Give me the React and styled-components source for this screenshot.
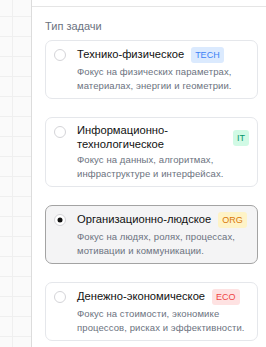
import React, { useState } from 'react';
import styled, { createGlobalStyle } from 'styled-components';

const GlobalStyle = createGlobalStyle`
    html, body {
        margin: 0;
        padding: 0;
        background: #ffffff;
    }
    body {
        font-family: "Liberation Sans", Arial, sans-serif;
    }
`;

const Layout = styled.div`
    display: flex;
    height: 347px;
    overflow: hidden;
`;

const Canvas = styled.div`
    width: 31px;
    flex-shrink: 0;
    background-color: #fafafa;
    background-image:
        linear-gradient(to right, #efefef 1px, transparent 1px),
        linear-gradient(to bottom, #efefef 1px, transparent 1px);
    background-size: 20px 20px;
    background-position: 12px 16px;
`;

const Sidebar = styled.aside`
    flex: 1;
    min-width: 0;
    border-left: 1px solid #dcdcdc;
    background: #ffffff;
`;

const SidebarHeader = styled.div`
    height: 6px;
    border-bottom: 1px solid #e5e5e5;
`;

const Section = styled.section`
    padding: 12px 8px 0 13px;
`;

const SectionLabel = styled.div`
    font-size: 11px;
    line-height: 14px;
    color: #6b7280;
    margin-bottom: 7px;
`;

const OptionList = styled.div`
    display: flex;
    flex-direction: column;
    gap: 18px;
`;

const OptionCard = styled.div`
    display: flex;
    align-items: flex-start;
    gap: 11px;
    padding: 6px 8px 6px 8px;
    border-radius: 7px;
    border: 1px solid ${p => (p.$selected ? '#a3a3a3' : '#e5e7eb')};
    background: ${p => (p.$selected ? '#f4f4f5' : '#ffffff')};
    cursor: pointer;
`;

const Radio = styled.span`
    position: relative;
    flex-shrink: 0;
    width: 12px;
    height: 12px;
    margin-top: 2px;
    border-radius: 50%;
    border: 1px solid #d4d4d8;
    background: #ffffff;
    box-sizing: border-box;

    &::after {
        content: '';
        display: ${p => (p.$checked ? 'block' : 'none')};
        position: absolute;
        left: 50%;
        top: 50%;
        width: 5px;
        height: 5px;
        border-radius: 50%;
        background: #111111;
        transform: translate(-50%, -50%);
    }
`;

const OptionBody = styled.div`
    flex: 1;
    min-width: 0;
`;

const TitleRow = styled.div`
    display: flex;
    align-items: center;
    gap: 7px;
    min-height: 16px;
    margin-bottom: 2px;
`;

const Title = styled.div`
    font-size: 11.2px;
    line-height: 13.5px;
    color: #111111;
`;

const badgeColors = {
    blue: { bg: '#dbeafe', fg: '#3b82f6' },
    green: { bg: '#d1fae5', fg: '#059669' },
    amber: { bg: '#fef3c7', fg: '#d97706' },
    red: { bg: '#fee2e2', fg: '#ef4444' },
};

const Badge = styled.span`
    flex-shrink: 0;
    font-size: 9px;
    line-height: 10px;
    padding: 3px 4px;
    border-radius: 3px;
    background: ${p => badgeColors[p.$tone].bg};
    color: ${p => badgeColors[p.$tone].fg};
`;

const Description = styled.div`
    font-size: 9.5px;
    line-height: 13.5px;
    color: #6b7280;
    letter-spacing: 0.1px;
`;

const taskTypes = [
    {
        id: 'tech',
        title: 'Технико-физическое',
        badge: 'TECH',
        tone: 'blue',
        text: 'Фокус на физических параметрах, материалах, энергии и геометрии.',
    },
    {
        id: 'it',
        title: 'Информационно-технологическое',
        badge: 'IT',
        tone: 'green',
        text: 'Фокус на данных, алгоритмах, инфраструктуре и интерфейсах.',
    },
    {
        id: 'org',
        title: 'Организационно-людское',
        badge: 'ORG',
        tone: 'amber',
        text: 'Фокус на людях, ролях, процессах, мотивации и коммуникации.',
    },
    {
        id: 'eco',
        title: 'Денежно-экономическое',
        badge: 'ECO',
        tone: 'red',
        text: 'Фокус на стоимости, экономике процессов, рисках и эффективности.',
    },
];

function App() {
    const [selected, setSelected] = useState('org');

    return (
        <>
            <GlobalStyle />
            <Layout>
                <Canvas />
                <Sidebar>
                    <SidebarHeader />
                    <Section>
                        <SectionLabel>Тип задачи</SectionLabel>
                        <OptionList>
                            {taskTypes.map(t => (
                                <OptionCard
                                    key={t.id}
                                    $selected={selected === t.id}
                                    onClick={() => setSelected(t.id)}
                                >
                                    <Radio $checked={selected === t.id} />
                                    <OptionBody>
                                        <TitleRow>
                                            <Title>{t.title}</Title>
                                            <Badge $tone={t.tone}>{t.badge}</Badge>
                                        </TitleRow>
                                        <Description>{t.text}</Description>
                                    </OptionBody>
                                </OptionCard>
                            ))}
                        </OptionList>
                    </Section>
                </Sidebar>
            </Layout>
        </>
    );
}

export default App;
